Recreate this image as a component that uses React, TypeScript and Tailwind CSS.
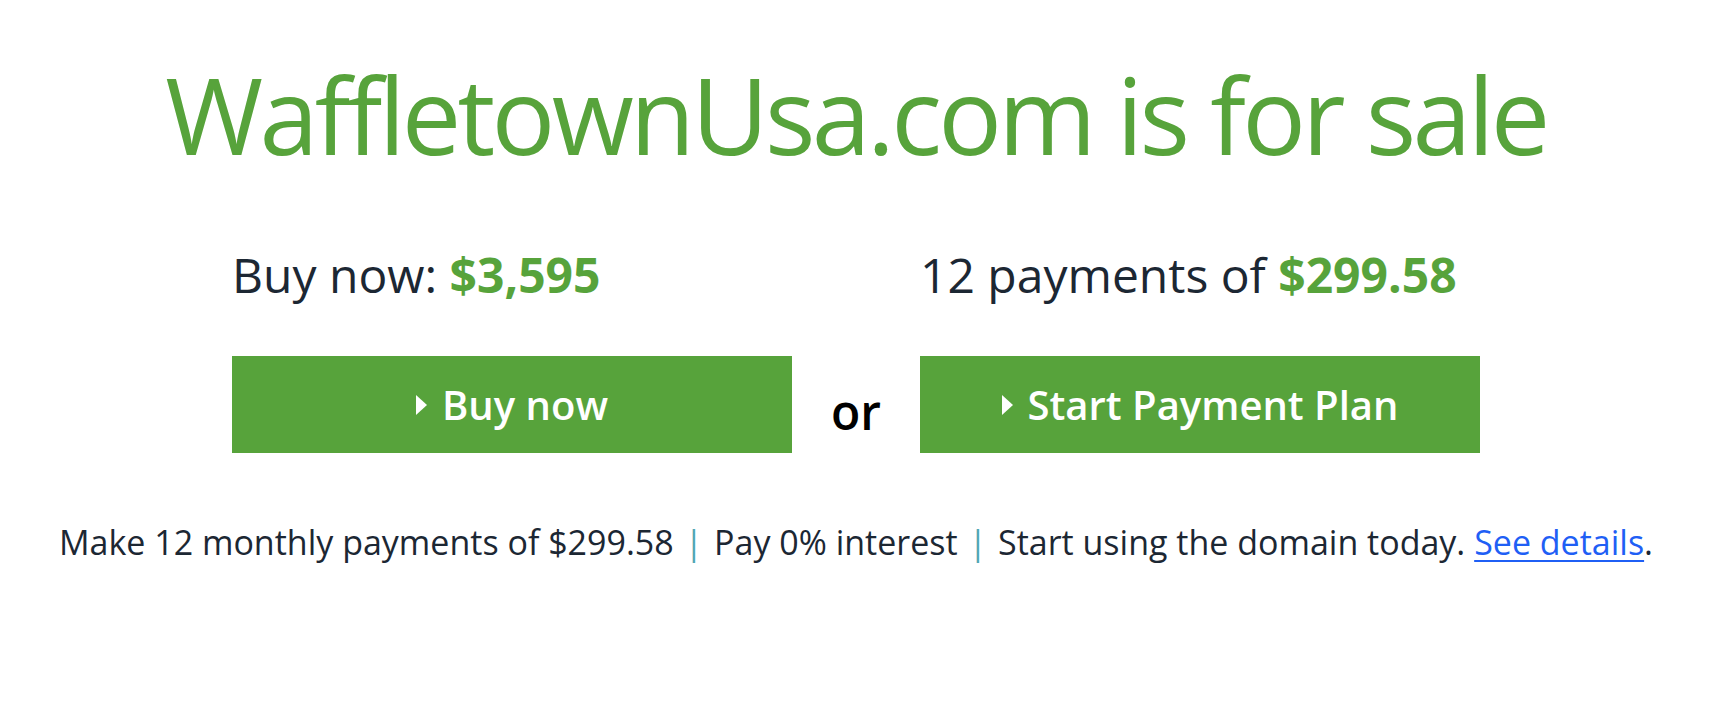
const green = "text-[#57a33b]";

function Caret() {
  return (
    <svg width="11" height="20" viewBox="0 0 11 20" className="mr-[15px] shrink-0">
      <path d="M0 0 L11 10 L0 20 Z" fill="white" />
    </svg>
  );
}

function ActionButton({ label }: { label: string }) {
  return (
    <button className="flex h-[97px] w-[560px] items-center justify-center bg-[#57a33b] text-[40px] font-semibold leading-none text-white">
      <Caret />
      <span>{label}</span>
    </button>
  );
}

export default function App() {
  return (
    <div
      className="flex min-h-[704px] w-[1712px] flex-col items-center bg-white pt-[61px] pb-10 text-[#1c2733]"
      style={{ fontFamily: '"Open Sans", "Noto Sans", sans-serif' }}
    >
      <h1 className={`text-[106px] leading-none tracking-[-3.7px] ${green}`}>WaffletownUsa.com is for sale</h1>

      <div className="mt-[84px] grid grid-cols-[560px_128px_560px] text-[48px] leading-none">
        <div>
          Buy now: <span className={`font-bold ${green}`}>$3,595</span>
        </div>
        <div />
        <div>
          12 payments of <span className={`font-bold ${green}`}>$299.58</span>
        </div>
      </div>

      <div className="mt-[57px] grid grid-cols-[560px_128px_560px] items-center">
        <ActionButton label="Buy now" />
        <div className="mt-[14px] text-center text-[48px] font-semibold leading-none text-black">or</div>
        <ActionButton label="Start Payment Plan" />
      </div>

      <p className="mt-[72px] text-[34px] leading-none">
        Make 12 monthly payments of $299.58 <span className="px-[2px] text-[#4fa6b3]">|</span> Pay 0% interest{" "}
        <span className="px-[2px] text-[#4fa6b3]">|</span> Start using the domain today.{" "}
        <a href="#" className="text-[#1f5ff5] underline decoration-2 underline-offset-[5px]">
          See details
        </a>
        .
      </p>
    </div>
  );
}
